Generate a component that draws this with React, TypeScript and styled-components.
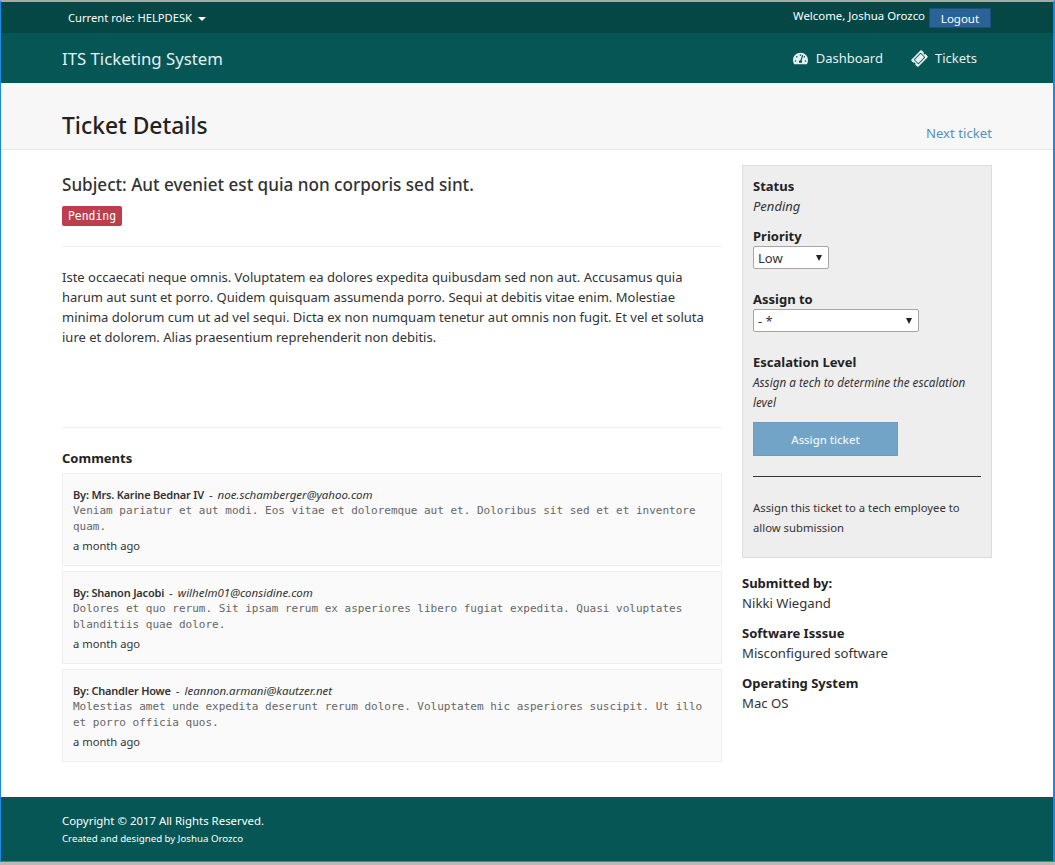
import React, { FC } from "react";
import styled, { createGlobalStyle } from "styled-components";
import { FaTachometerAlt, FaTicketAlt } from "react-icons/fa";

const SANS = `"Noto Sans", "Open Sans", sans-serif`;

type Comment = { author: string; email: string; body: string };

const comments: Array<Comment> = [
  {
    author: "Mrs. Karine Bednar IV",
    email: "noe.schamberger@yahoo.com",
    body: "Veniam pariatur et aut modi. Eos vitae et doloremque aut et. Doloribus sit sed et et inventore quam.",
  },
  {
    author: "Shanon Jacobi",
    email: "wilhelm01@considine.com",
    body: "Dolores et quo rerum. Sit ipsam rerum ex asperiores libero fugiat expedita. Quasi voluptates blanditiis quae dolore.",
  },
  {
    author: "Chandler Howe",
    email: "leannon.armani@kautzer.net",
    body: "Molestias amet unde expedita deserunt rerum dolore. Voluptatem hic asperiores suscipit. Ut illo et porro officia quos.",
  },
];

const GlobalStyle = createGlobalStyle`
  html, body { margin: 0; padding: 0; background: #b9b9b9; }
  * { box-sizing: border-box; }
  body { font-family: ${SANS}; font-size: 13px; color: #333; }
`;

const Frame = styled.div`
  width: 1055px;
  height: 862px;
  border-left: 1px solid #1e88e5;
  border-right: 2px solid #1e88e5;
  border-top: 2px solid #a9a9a9;
  border-bottom: 1px solid #1e88e5;
  background: #fff;
  display: flex;
  flex-direction: column;
`;
const TopBar = styled.div`
  height: 31px;
  background: #044744;
  color: #fff;
  font-size: 11.2px;
  display: flex;
  justify-content: space-between;
  padding: 0 62px 0 67px;
`;
const Role = styled.div`
  display: flex;
  align-items: center;
  gap: 6px;
`;
const Caret = styled.span`
  width: 0;
  height: 0;
  margin-top: 2px;
  border-left: 4px solid transparent;
  border-right: 4px solid transparent;
  border-top: 4px solid #fff;
`;
const Welcome = styled.div`
  display: flex;
  align-items: flex-start;
  gap: 4px;
  padding-top: 6px;
  font-size: 11.4px;
`;
const LogoutButton = styled.button`
  width: 62px;
  height: 20px;
  border: 1px solid #1f4e79;
  background: #2a6496;
  color: #fff;
  font: 11.5px ${SANS};
  padding: 0;
`;
const NavBar = styled.div`
  height: 50px;
  background: #055654;
  display: flex;
  align-items: center;
  justify-content: space-between;
  padding: 0 76px 0 61px;
  color: #e6f0ef;
`;
const Brand = styled.div`
  font-size: 16.75px;
`;
const NavLinks = styled.div`
  display: flex;
  gap: 29px;
`;
const NavLink = styled.a`
  display: flex;
  align-items: center;
  gap: 8px;
  font-size: 13px;
  svg { font-size: 15px; }
`;
const TicketIcon = styled(FaTicketAlt)`
  transform: rotate(-45deg);
`;
const PageHeader = styled.div`
  height: 67px;
  background: #f7f7f7;
  border-bottom: 1px solid #e8e8e8;
  display: flex;
  align-items: flex-end;
  justify-content: space-between;
  padding: 0 61px 7px 61px;
`;
const PageTitle = styled.h1`
  margin: 0;
  font-size: 22.8px;
  font-weight: 500;
  color: #222;
  line-height: 32px;
`;
const NextLink = styled.a`
  color: #5a8fb8;
  font-size: 13.2px;
`;
const Body = styled.div`
  flex: 1;
  display: grid;
  grid-template-columns: 660px 250px;
  gap: 20px;
  padding: 15px 0 0 61px;
`;
const Subject = styled.h2`
  margin: 8px 0 0;
  font-size: 17.1px;
  font-weight: 500;
  line-height: 24px;
  color: #333;
`;
const Badge = styled.span`
  display: inline-block;
  margin-top: 9px;
  height: 20px;
  padding: 0 6px;
  border-radius: 2px;
  background: #bd3f4d;
  color: #fff;
  font: 11.4px/20px "DejaVu Sans Mono", monospace;
`;
const Rule = styled.hr<{ $top: number }>`
  border: 0;
  border-top: 1px solid #eee;
  margin: ${(p) => p.$top}px 0 0;
`;
const Description = styled.p`
  margin: 20px 0 0;
  font-size: 13px;
  line-height: 20px;
  height: 160px;
`;
const CommentsTitle = styled.h3`
  margin: 20px 0 5px;
  font-size: 13px;
  font-weight: 700;
  line-height: 20px;
  color: #222;
`;
const CommentCard = styled.div`
  background: #fafafa;
  border: 1px solid #eee;
  padding: 13px 10px 10px;
  margin-bottom: 5px;
`;
const CommentHead = styled.div`
  font-size: 11.5px;
  line-height: 16px;
`;
const CommentAuthor = styled.b`
  font-size: 11px;
  font-weight: 600;
  letter-spacing: -0.2px;
`;
const CommentDash = styled.span`
  margin: 0 5px;
`;
const CommentBody = styled.div`
  font: 11px/16px "DejaVu Sans Mono", monospace;
  color: #666;
`;
const CommentTime = styled.div`
  margin-top: 2px;
  font-size: 11.2px;
  line-height: 18px;
`;
const SidePanel = styled.div`
  background: #eee;
  border: 1px solid #ddd;
  padding: 10px;
  height: 393px;
`;
const FieldLabel = styled.div<{ $top?: number }>`
  font-weight: 700;
  font-size: 13px;
  line-height: 20px;
  color: #222;
  margin-top: ${(p) => p.$top ?? 0}px;
`;
const Italic = styled.div`
  font-style: italic;
  font-size: 13px;
  line-height: 20px;
`;
const SmallItalic = styled(Italic)`
  font-size: 11.7px;
`;
const FakeSelect = styled.div<{ $width: number }>`
  width: ${(p) => p.$width}px;
  height: 23px;
  background: #fff;
  border: 1px solid #a6a6a6;
  border-radius: 2px;
  display: flex;
  align-items: center;
  justify-content: space-between;
  padding: 0 6px 0 4px;
  font-size: 13px;
`;
const SelectArrow = styled.span`
  width: 0;
  height: 0;
  border-left: 3.5px solid transparent;
  border-right: 3.5px solid transparent;
  border-top: 6px solid #222;
`;
const AssignButton = styled.button`
  display: block;
  margin-top: 10px;
  width: 145px;
  height: 34px;
  background: #72a4c8;
  border: 1px solid #6d9dc0;
  color: #eef5fa;
  font: 500 11.3px ${SANS};
  padding: 0;
`;
const PanelRule = styled.hr`
  border: 0;
  border-top: 1px solid #333;
  margin: 20px 0 0;
`;
const Hint = styled.p`
  margin: 21px 0 0;
  font-size: 11.3px;
  line-height: 20px;
`;
const MetaValue = styled.div`
  font-size: 13.15px;
  line-height: 20px;
`;
const Footer = styled.div`
  height: 64px;
  background: #055654;
  color: #fff;
  padding: 15px 61px 0;
`;
const FooterLine = styled.div`
  font-size: 11.4px;
  line-height: 18px;
`;
const FooterSmall = styled.div`
  font-size: 9.7px;
  line-height: 18px;
`;

const App: FC = () => {
  return (
    <Frame>
      <GlobalStyle />
      <TopBar>
        <Role>
          Current role: HELPDESK <Caret />
        </Role>
        <Welcome>
          Welcome, Joshua Orozco
          <LogoutButton>Logout</LogoutButton>
        </Welcome>
      </TopBar>
      <NavBar>
        <Brand>ITS Ticketing System</Brand>
        <NavLinks>
          <NavLink>
            <FaTachometerAlt /> Dashboard
          </NavLink>
          <NavLink>
            <TicketIcon /> Tickets
          </NavLink>
        </NavLinks>
      </NavBar>
      <PageHeader>
        <PageTitle>Ticket Details</PageTitle>
        <NextLink>Next ticket</NextLink>
      </PageHeader>
      <Body>
        <div>
          <Subject>Subject: Aut eveniet est quia non corporis sed sint.</Subject>
          <Badge>Pending</Badge>
          <Rule $top={20} />
          <Description>
            Iste occaecati neque omnis. Voluptatem ea dolores expedita quibusdam sed non aut. Accusamus quia harum aut sunt et porro. Quidem quisquam assumenda porro. Sequi at debitis vitae enim. Molestiae minima dolorum cum ut ad vel sequi. Dicta ex non numquam tenetur aut omnis non fugit. Et vel et soluta iure et dolorem. Alias praesentium reprehenderit non debitis.
          </Description>
          <Rule $top={0} />
          <CommentsTitle>Comments</CommentsTitle>
          {comments.map((c, id) => (
            <CommentCard key={id}>
              <CommentHead>
                <CommentAuthor>By: {c.author}</CommentAuthor>
                <CommentDash>-</CommentDash>
                <i>{c.email}</i>
              </CommentHead>
              <CommentBody>{c.body}</CommentBody>
              <CommentTime>a month ago</CommentTime>
            </CommentCard>
          ))}
        </div>
        <div>
          <SidePanel>
            <FieldLabel>Status</FieldLabel>
            <Italic>Pending</Italic>
            <FieldLabel $top={10}>Priority</FieldLabel>
            <FakeSelect $width={76}>
              Low <SelectArrow />
            </FakeSelect>
            <FieldLabel $top={20}>Assign to</FieldLabel>
            <FakeSelect $width={166}>
              - * <SelectArrow />
            </FakeSelect>
            <FieldLabel $top={20}>Escalation Level</FieldLabel>
            <SmallItalic>Assign a tech to determine the escalation level</SmallItalic>
            <AssignButton>Assign ticket</AssignButton>
            <PanelRule />
            <Hint>Assign this ticket to a tech employee to allow submission</Hint>
          </SidePanel>
          <FieldLabel $top={15}>Submitted by:</FieldLabel>
          <MetaValue>Nikki Wiegand</MetaValue>
          <FieldLabel $top={10}>Software Isssue</FieldLabel>
          <MetaValue>Misconfigured software</MetaValue>
          <FieldLabel $top={10}>Operating System</FieldLabel>
          <MetaValue>Mac OS</MetaValue>
        </div>
      </Body>
      <Footer>
        <FooterLine>Copyright © 2017 All Rights Reserved.</FooterLine>
        <FooterSmall>Created and designed by Joshua Orozco</FooterSmall>
      </Footer>
    </Frame>
  );
};

export default App;
